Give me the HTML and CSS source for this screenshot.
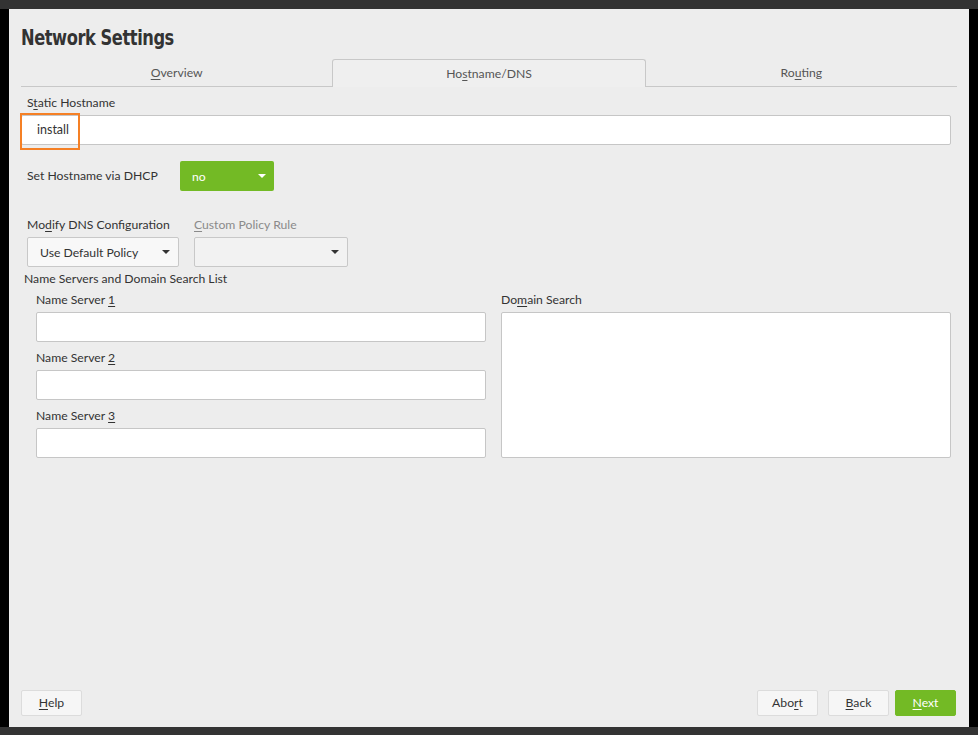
FILE: index.html
```html
<!DOCTYPE html>
<html>
<head>
<meta charset="utf-8">
<link rel="stylesheet" href="styles.css">
</head>
<body>
<div class="frame">
  <div class="panel">
    <h1 class="title"><span class="title-text">Network Settings</span></h1>
    <div class="tabs">
      <div class="tab"><u>O</u>verview</div>
      <div class="tab active">Ho<u>s</u>tname/DNS</div>
      <div class="tab">Ro<u>u</u>ting</div>
    </div>
    <div class="content">
      <div class="label hostlabel">S<u>t</u>atic Hostname</div>
      <div class="hostwrap">
        <div class="input host">install</div>
        <div class="focus"></div>
      </div>
      <div class="dhcp-row">
        <span class="label">Set Hostname via DHCP</span>
        <div class="combo green"><span>no</span><span class="arrow"></span></div>
      </div>
      <div class="dns-row">
        <div class="field">
          <div class="label">Mo<u>d</u>ify DNS Configuration</div>
          <div class="combo plain w150"><span>Use Default Policy</span><span class="arrow"></span></div>
        </div>
        <div class="field">
          <div class="label disabled"><u>C</u>ustom Policy Rule</div>
          <div class="combo plain dis w152"><span></span><span class="arrow"></span></div>
        </div>
      </div>
      <div class="label nslabel">Name Servers and Domain Search List</div>
      <div class="ns-grid">
        <div class="ns-col">
          <div class="label">Name Server <u>1</u></div>
          <div class="input ns"></div>
          <div class="label">Name Server <u>2</u></div>
          <div class="input ns"></div>
          <div class="label">Name Server <u>3</u></div>
          <div class="input ns"></div>
        </div>
        <div class="ns-col">
          <div class="label">Do<u>m</u>ain Search</div>
          <div class="input area"></div>
        </div>
      </div>
    </div>
    <div class="footer">
      <div class="btn"><u>H</u>elp</div>
      <div class="spacer"></div>
      <div class="btn">Abo<u>r</u>t</div>
      <div class="btn"><u>B</u>ack</div>
      <div class="btn primary"><u>N</u>ext</div>
    </div>
  </div>
</div>
</body>
</html>
```
FILE: styles.css
```css
* { box-sizing: border-box; }
html, body { margin: 0; padding: 0; }
body {
  background: #333333;
  padding: 9px 0 8px 0;
  font-family: "Lato", "Noto Sans", sans-serif;
  font-size: 12.2px;
  color: #333;
}
.frame {
  background: #000;
  padding: 0 9px;
  height: 718px;
}
.panel {
  background: #ededed;
  height: 100%;
  padding: 0 12px 0 12px;
  display: flex;
  flex-direction: column;
}
u { text-decoration: underline; text-underline-offset: 2px; }
.title {
  margin: 0;
  padding-top: 17px;
  height: 50px;
  font-family: "DejaVu Sans", sans-serif;
  font-stretch: condensed;
  font-weight: bold;
  font-size: 21px;
  line-height: 24px;
  color: #333;
  letter-spacing: -0.5px;
}
.title-text {
  display: inline-block;
  transform: scaleX(0.86);
  transform-origin: left center;
}
.tabs {
  display: flex;
  border-bottom: 1px solid #c8c8c8;
  width: 936px;
  height: 28px;
}
.tab {
  flex: 1;
  text-align: center;
  padding-top: 6px;
  color: #555;
}
.tab.active {
  border: 1px solid #c8c8c8;
  border-bottom: none;
  border-radius: 3px 3px 0 0;
  margin-bottom: -1px;
  background: #efefef;
}
.label { color: #333; line-height: 16px; }
.label.disabled { color: #8a8a8a; }
.hostlabel { margin: 8px 0 4px 6px; }
.hostwrap { position: relative; width: 930px; }
.input {
  background: #fff;
  border: 1px solid #c6c6c6;
  border-radius: 2px;
}
.host { height: 30px; padding: 6px 0 0 15px; color: #333; font-size: 12.5px; }
.focus {
  position: absolute;
  left: -1px;
  top: -2px;
  width: 60px;
  height: 37px;
  border: 2px solid #f58025;
}
.dhcp-row {
  display: flex;
  align-items: center;
  margin: 16px 0 0 6px;
}
.dhcp-row .label { width: 153px; }
.combo {
  height: 30px;
  display: flex;
  align-items: center;
  justify-content: space-between;
  padding: 0 8px 0 12px;
  border-radius: 2px;
}
.combo .arrow {
  width: 0; height: 0;
  border-left: 4px solid transparent;
  border-right: 4px solid transparent;
  border-top: 4px solid currentColor;
}
.green {
  background: #73ba25;
  color: #fff;
  width: 94px;
}
.plain {
  background: #f8f8f8;
  border: 1px solid #c8c8c8;
  color: #333;
}
.plain.dis { background: #f2f2f2; }
.w150 { width: 152px; }
.w152 { width: 154px; }
.dns-row {
  display: flex;
  gap: 15px;
  margin: 26px 0 0 6px;
}
.dns-row .label { margin-bottom: 4px; }
.nslabel { margin: 4px 0 0 3px; }
.ns-grid {
  display: grid;
  grid-template-columns: 450px 450px;
  gap: 15px;
  margin: 5px 0 0 15px;
}
.ns-col .label { margin-bottom: 4px; }
.ns { height: 30px; margin-bottom: 8px; }
.area { height: 146px; }
.footer {
  margin-top: auto;
  margin-bottom: 11px;
  display: flex;
  gap: 10px;
  width: 935px;
}
.footer .spacer { flex: 1; }
.btn {
  height: 26px;
  width: 61px;
  background: #f6f6f6;
  border: 1px solid #dcdcdc;
  border-radius: 2px;
  text-align: center;
  line-height: 24px;
  color: #333;
}
.btn.primary {
  background: #73ba25;
  border-color: #73ba25;
  color: #fff;
  margin-left: -4px;
}
```
